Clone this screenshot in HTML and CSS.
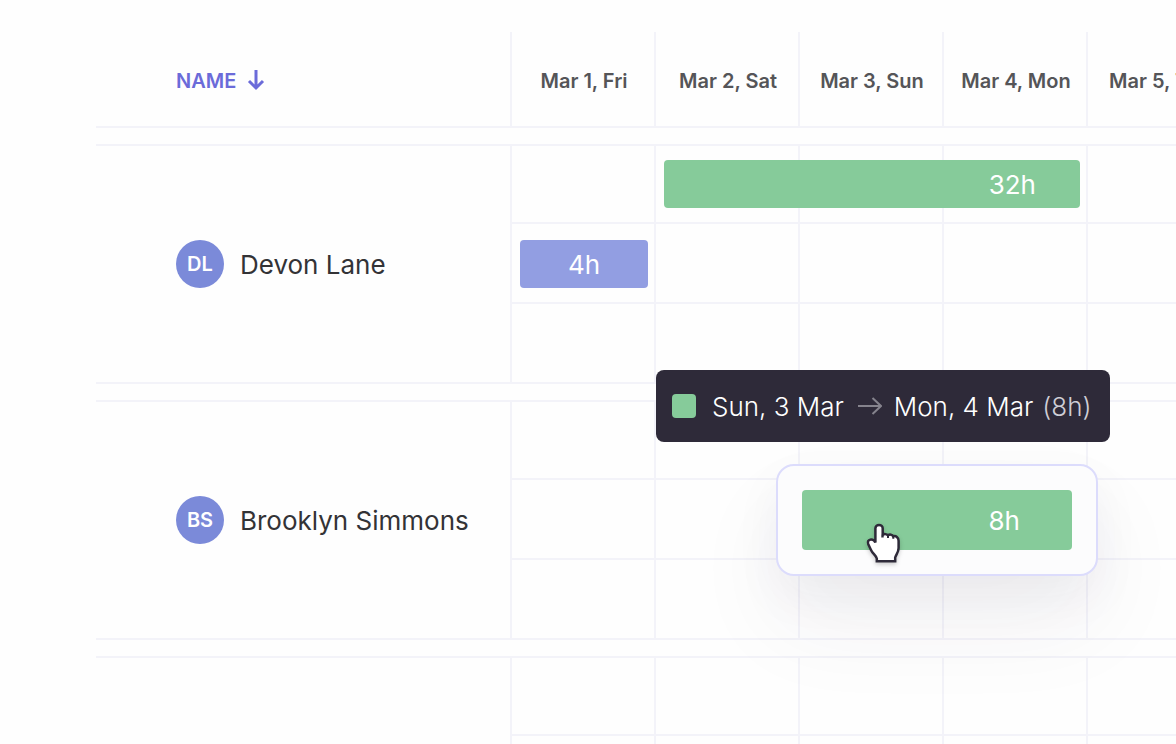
FILE: index.html
```
<!DOCTYPE html>
<html lang="en">

<head>
    <meta charset="UTF-8">
    <meta name="viewport" content="width=device-width, initial-scale=1.0">
    <title>Team schedule</title>
    <link rel="stylesheet" href="styles.css">
</head>

<body>
    <main class="schedule">
        <table class="timeline">
            <colgroup>
                <col class="name-col">
                <col class="day-col" span="5">
            </colgroup>
            <thead>
                <tr class="head-row">
                    <th class="name-head" scope="col">
                        <button class="sort-btn" type="button">
                            NAME
                            <svg class="sort-icon" viewBox="0 0 18 22" aria-hidden="true">
                                <path d="M9 1V19M2 12l7 7 7-7" />
                            </svg>
                        </button>
                    </th>
                    <th class="day-head" scope="col">Mar 1, Fri</th>
                    <th class="day-head" scope="col">Mar 2, Sat</th>
                    <th class="day-head" scope="col">Mar 3, Sun</th>
                    <th class="day-head" scope="col">Mar 4, Mon</th>
                    <th class="day-head" scope="col">Mar 5, Tue</th>
                </tr>
            </thead>
            <tbody>
                <tr class="gap-row"><td colspan="6"></td></tr>
                <tr class="first-row">
                    <th class="person-cell" scope="rowgroup" rowspan="3">
                        <div class="person">
                            <span class="avatar">DL</span>
                            <span class="person-name">Devon Lane</span>
                        </div>
                    </th>
                    <td></td>
                    <td><button class="bar bar-green bar-long" type="button">32h</button></td>
                    <td></td>
                    <td></td>
                    <td></td>
                </tr>
                <tr>
                    <td><button class="bar bar-blue" type="button">4h</button></td>
                    <td></td>
                    <td></td>
                    <td></td>
                    <td></td>
                </tr>
                <tr class="last-row">
                    <td></td>
                    <td></td>
                    <td></td>
                    <td></td>
                    <td></td>
                </tr>
            </tbody>
            <tbody>
                <tr class="gap-row"><td colspan="6"></td></tr>
                <tr class="first-row">
                    <th class="person-cell" scope="rowgroup" rowspan="3">
                        <div class="person">
                            <span class="avatar">BS</span>
                            <span class="person-name">Brooklyn Simmons</span>
                        </div>
                    </th>
                    <td></td>
                    <td></td>
                    <td></td>
                    <td></td>
                    <td></td>
                </tr>
                <tr>
                    <td></td>
                    <td></td>
                    <td>
                        <!-- bar being moved, with its date tooltip -->
                        <div class="drag-card">
                            <div class="tooltip" role="tooltip">
                                <span class="swatch"></span>
                                <span>Sun, 3 Mar</span>
                                <svg class="range-icon" viewBox="0 0 26 20" aria-hidden="true">
                                    <path d="M2 10h23M16.500 2l8.500 8-8.500 8" />
                                </svg>
                                <span>Mon, 4 Mar</span>
                                <span class="hours">(8h)</span>
                            </div>
                            <button class="bar bar-green bar-drag" type="button">8h</button>
                            <svg class="cursor" viewBox="0 0 40 48" aria-hidden="true">
                                <path d="M15 5C13 5 11.400 6.400 11.400 8.300V22.500C10.500 20.500 9 19.300 7 19.400C4.300 19.600 3.300 21.700 4.300 24.300L7 30C8.500 33.400 12 35.500 12.800 38.500V41.200H31.200V37.500C32 34.500 34.600 32.500 34.600 28V20.800C34.600 17.300 31.800 15.500 29.300 16.300C28.300 14.500 25.600 14 24 15.400C22.700 14 20.200 13.600 18.700 14.900V8.300C18.700 6.400 17.200 5 15 5Z" />
                                <path class="cursor-lines" d="M18.700 14.500V17.500M24 15.500V18M29.300 16.500V18.800" />
                            </svg>
                        </div>
                    </td>
                    <td></td>
                    <td></td>
                </tr>
                <tr class="last-row">
                    <td></td>
                    <td></td>
                    <td></td>
                    <td></td>
                    <td></td>
                </tr>
            </tbody>
            <tbody>
                <tr class="gap-row"><td colspan="6"></td></tr>
                <tr class="first-row">
                    <th class="person-cell" scope="rowgroup" rowspan="3"></th>
                    <td></td>
                    <td></td>
                    <td></td>
                    <td></td>
                    <td></td>
                </tr>
                <tr>
                    <td></td>
                    <td></td>
                    <td></td>
                    <td></td>
                    <td></td>
                </tr>
                <tr class="last-row">
                    <td></td>
                    <td></td>
                    <td></td>
                    <td></td>
                    <td></td>
                </tr>
            </tbody>
        </table>
    </main>
</body>

</html>
```

FILE: styles.css
```
* {
    margin: 0;
    padding: 0;
    box-sizing: border-box;
}

body {
    background-color: #fefefe;
    font-family: Inter, "Liberation Sans", sans-serif;
    color: #333336;
}

.schedule {
    height: 100vh;
    padding: 32px 0 0 96px;
    overflow: hidden;
}

.timeline {
    width: 1134px;
    table-layout: fixed;
    border-collapse: separate;
    border-spacing: 0;
}

.name-col {
    width: 414px;
}

.day-col {
    width: 144px;
}

/* header */
.head-row th {
    height: 96px;
    border-bottom: 2px solid #f3f3f9;
    vertical-align: middle;
}

.name-head {
    padding-left: 80px;
    text-align: left;
}

.day-head {
    border-left: 2px solid #f3f3f9;
    padding: 4px 0 0 2px;
    font-size: 20px;
    font-weight: 600;
    color: #555558;
    white-space: nowrap;
}

.sort-btn {
    display: flex;
    align-items: center;
    gap: 11px;
    padding-top: 4px;
    border: none;
    background: none;
    font-family: inherit;
    font-size: 20px;
    font-weight: 600;
    color: #6b6bd9;
}

.sort-icon {
    width: 18px;
    height: 22px;
    margin-bottom: 2px;
    fill: none;
    stroke: #6b6bd9;
    stroke-width: 3;
}

/* grid rows */
td {
    position: relative;
    height: 80px;
    padding: 0 6px 14px 8px;
    border-top: 2px solid #f3f3f9;
    border-left: 2px solid #f3f3f9;
    vertical-align: bottom;
}

.first-row td {
    height: 78px;
}

.last-row td {
    height: 82px;
    border-bottom: 2px solid #f3f3f9;
}

.gap-row td {
    height: 16px;
    padding: 0;
    border: none;
}

.person-cell {
    padding-left: 80px;
    border-top: 2px solid #f3f3f9;
    border-bottom: 2px solid #f3f3f9;
    vertical-align: middle;
}

.person {
    display: flex;
    align-items: center;
    gap: 16px;
    font-size: 26px;
    font-weight: 400;
    white-space: nowrap;
}

.avatar {
    display: flex;
    align-items: center;
    justify-content: center;
    width: 48px;
    height: 48px;
    border-radius: 50%;
    background-color: #7b8ad9;
    font-size: 20px;
    font-weight: 600;
    color: #fff;
}

/* bars */
.bar {
    position: relative;
    z-index: 1;
    display: block;
    width: 100%;
    height: 48px;
    border: none;
    border-radius: 4px;
    font-family: inherit;
    font-size: 26px;
    font-weight: 400;
    color: #fff;
}

.bar-blue {
    background-color: #929ee2;
}

.bar-green {
    background-color: #86cb9a;
}

.bar-long {
    width: 416px;
    padding-right: 44px;
    text-align: right;
}

.bar-drag {
    height: 60px;
    padding-right: 52px;
    text-align: right;
}

.drag-card {
    position: absolute;
    top: -16px;
    left: -24px;
    z-index: 2;
    width: 322px;
    padding: 24px;
    border: 2px solid #dcdcfc;
    border-radius: 18px;
    background-color: #fcfcfd;
    box-shadow: 0 20px 48px rgba(46, 42, 77, 0.05), 0 48px 96px rgba(46, 42, 67, 0.06);
}

.tooltip {
    position: absolute;
    bottom: 132px;
    left: -122px;
    display: flex;
    align-items: center;
    height: 72px;
    padding: 0 18px 0 16px;
    border-radius: 8px;
    background-color: #2e2a39;
    font-size: 26px;
    font-weight: 300;
    color: #fff;
    white-space: nowrap;
}

.swatch {
    width: 24px;
    height: 24px;
    margin-right: 16px;
    border-radius: 4px;
    background-color: #86cb9a;
}

.range-icon {
    width: 26px;
    height: 20px;
    margin: 0 12px;
    fill: none;
    stroke: #85838d;
    stroke-width: 2;
}

.hours {
    margin-left: 9px;
    color: #cfced6;
}

.cursor {
    position: absolute;
    top: 54px;
    left: 86px;
    z-index: 3;
    width: 40px;
    height: 48px;
    fill: #fff;
    stroke: #2e2a39;
    stroke-width: 2.500;
    filter: drop-shadow(0 2px 2px rgba(0, 0, 0, 0.2));
}

.cursor-lines {
    fill: none;
    stroke-width: 2;
}
```
